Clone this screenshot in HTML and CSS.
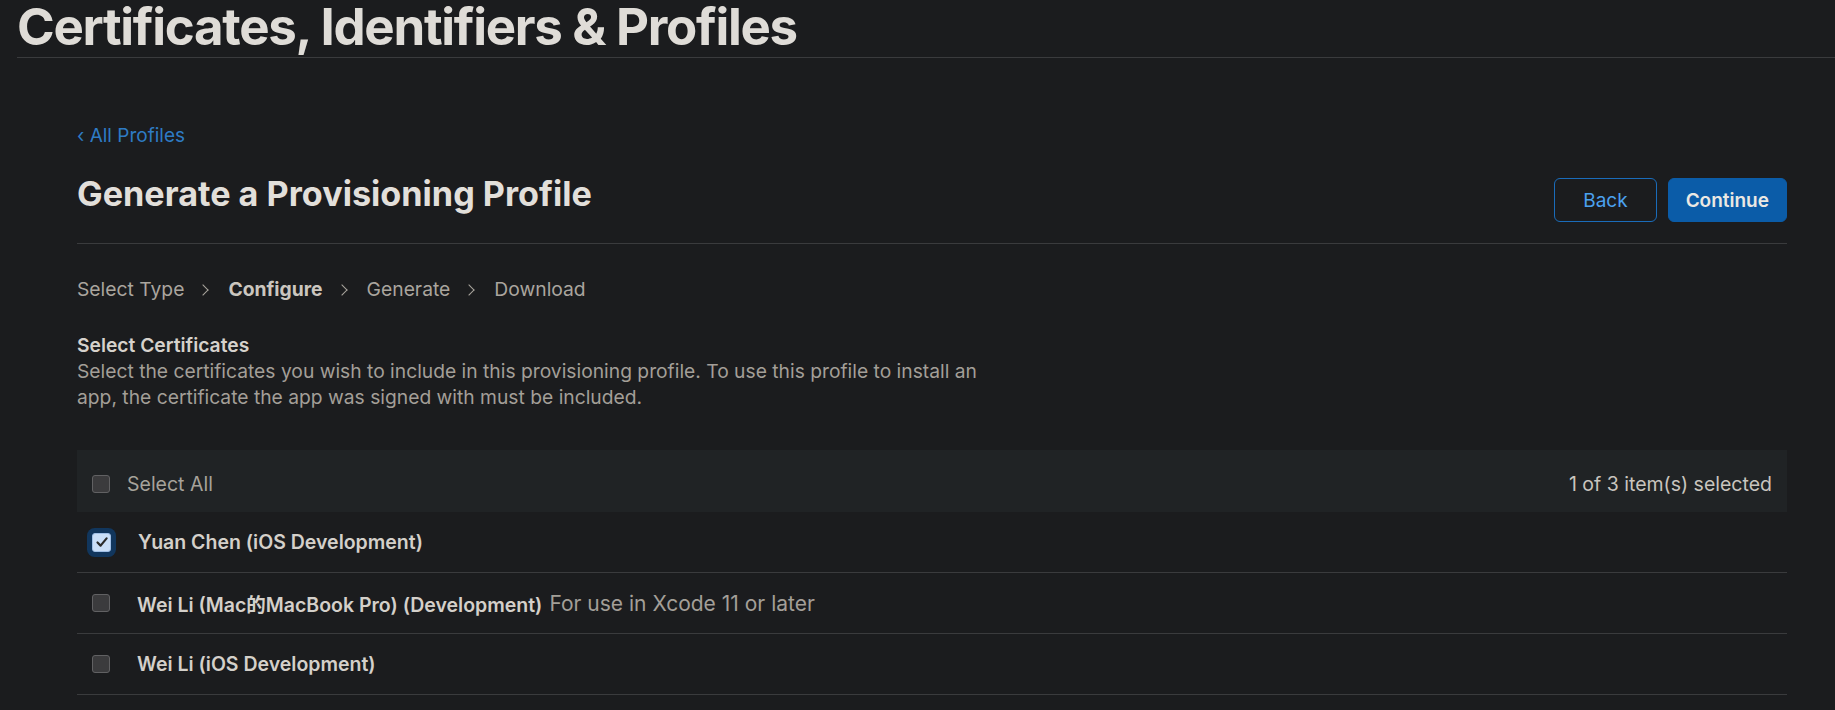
FILE: index.html
```html
<!DOCTYPE html>
<html>
  <head>
    <title>Certificates, Identifiers &amp; Profiles</title>
    <link rel="stylesheet" href="styles.css">
  </head>
  <body>

    <header class="page-header">
      <h1 class="page-title">Certificates, Identifiers &amp; Profiles</h1>
    </header>

    <main class="content">
      <nav class="breadcrumb">
        <a href="#">&lsaquo; All Profiles</a>
      </nav>

      <div class="heading-row">
        <h2>Generate a Provisioning Profile</h2>
        <div class="actions">
          <button class="btn btn-secondary" type="button">Back</button>
          <button class="btn btn-primary" type="button">Continue</button>
        </div>
      </div>

      <ol class="steps">
        <li>Select Type</li>
        <li class="current">Configure</li>
        <li>Generate</li>
        <li>Download</li>
      </ol>

      <section class="cert-intro">
        <h3>Select Certificates</h3>
        <p>Select the certificates you wish to include in this provisioning profile. To use this profile to install an app, the certificate the app was signed with must be included.</p>
      </section>

      <div class="cert-list">
        <div class="list-header">
          <label class="select-all"><span class="checkbox"></span>Select All</label>
          <span class="count">1 of 3 item(s) selected</span>
        </div>

        <div class="cert-row">
          <span class="checkbox checked">
            <svg width="14" height="14" viewBox="0 0 14 14"><path d="M2.5 7.5 L5.6 10.6 L11.6 3.4" fill="none" stroke="#2b2b2b" stroke-width="2.2" stroke-linecap="round" stroke-linejoin="round"/></svg>
          </span>
          <span class="cert-name">Yuan Chen (iOS Development)</span>
        </div>

        <div class="cert-row">
          <span class="checkbox"></span>
          <span class="cert-name">Wei Li (Mac的MacBook Pro) (Development)</span>
          <span class="cert-note">For use in Xcode 11 or later</span>
        </div>

        <div class="cert-row">
          <span class="checkbox"></span>
          <span class="cert-name">Wei Li (iOS Development)</span>
        </div>
      </div>
    </main>

  </body>
</html>
```

FILE: styles.css
```css
/* Primary layout components
------------------------------- */

body
{
  margin: 0;
  background-color: #1b1c1e;
  color: #d6d2cc;
  font-family: Inter, "Noto Sans CJK SC", sans-serif;
}

.page-header
{
  margin-left: 17px;
  padding-bottom: 4px;
  border-bottom: 1px solid #3a3b3d;
}

.page-title
{
  margin: 0;
  font-size: 51px;
  line-height: 53px;
  font-weight: 700;
  letter-spacing: -1.3px;
  color: #dfdcd7;
}

.content
{
  padding: 0 48px 0 77px;
}

.breadcrumb
{
  margin-top: 66px;
  font-size: 19px;
  line-height: 24px;
}

.breadcrumb a
{
  color: #2e7bc4;
  text-decoration: none;
}

.heading-row
{
  display: flex;
  justify-content: space-between;
  align-items: flex-start;
  margin-top: 26px;
  padding-bottom: 21px;
  border-bottom: 1px solid #3a3b3d;
}

.heading-row h2
{
  margin: 0;
  font-size: 34.2px;
  line-height: 40px;
  font-weight: 700;
  color: #e2dfda;
}

.actions
{
  display: flex;
  gap: 11px;
  margin-top: 4px;
}

/* controls
------------------------------- */

.btn
{
  height: 44px;
  border-radius: 6px;
  font-family: inherit;
  font-size: 19px;
  cursor: pointer;
}

.btn-secondary
{
  padding: 0 28px;
  background: transparent;
  border: 1px solid #1a6cba;
  color: #4ba1ee;
}

.btn-primary
{
  padding: 0 17px;
  background: #0b5ca8;
  border: 1px solid #0b5ca8;
  color: #ebe8e3;
  font-weight: 600;
}

.steps
{
  display: flex;
  align-items: center;
  list-style: none;
  margin: 33px 0 0;
  padding: 0;
  font-size: 19.3px;
  line-height: 24px;
  color: #aaa59e;
}

.steps li
{
  display: flex;
  align-items: center;
}

.steps li + li::before
{
  content: "";
  width: 7px;
  height: 7px;
  margin: 1px 21px 0 15px;
  border-top: 1.6px solid #aaa59e;
  border-right: 1.6px solid #aaa59e;
  transform: rotate(45deg);
}

.steps .current
{
  font-weight: 700;
  color: #cbc6bf;
}

.cert-intro
{
  margin-top: 31px;
  font-size: 19.25px;
  line-height: 26px;
}

.cert-intro h3
{
  margin: 0;
  font-size: inherit;
  font-weight: 600;
  color: #d6d2cc;
}

.cert-intro p
{
  margin: 0;
  max-width: 920px;
  color: #a39f98;
}

.cert-list
{
  margin-top: 40px;
  font-size: 19.5px;
}

.list-header
{
  display: flex;
  justify-content: space-between;
  align-items: center;
  box-sizing: border-box;
  height: 62px;
  padding: 5px 15px 0;
  background: #202325;
}

.select-all
{
  display: flex;
  align-items: center;
  gap: 17px;
  color: #a6a29b;
}

.count
{
  color: #c9c5bf;
}

.cert-row
{
  display: flex;
  align-items: center;
  height: 60px;
  padding-left: 15px;
  border-bottom: 1px solid #3a3b3d;
}

.cert-row .checkbox
{
  margin-right: 27px;
}

.cert-name
{
  font-weight: 600;
  color: #d4d0ca;
}

.cert-note
{
  margin-left: 7px;
  font-size: 21px;
  color: #a39f98;
}

.checkbox
{
  display: inline-flex;
  align-items: center;
  justify-content: center;
  box-sizing: border-box;
  width: 18px;
  height: 18px;
  border: 1px solid #616163;
  border-radius: 3px;
  background: #3b3b3d;
}

.checkbox.checked
{
  width: 19px;
  height: 19px;
  border-color: #9fbfe6;
  background: #cadff8;
  box-shadow: 0 0 0 5px #11365d;
}
```
